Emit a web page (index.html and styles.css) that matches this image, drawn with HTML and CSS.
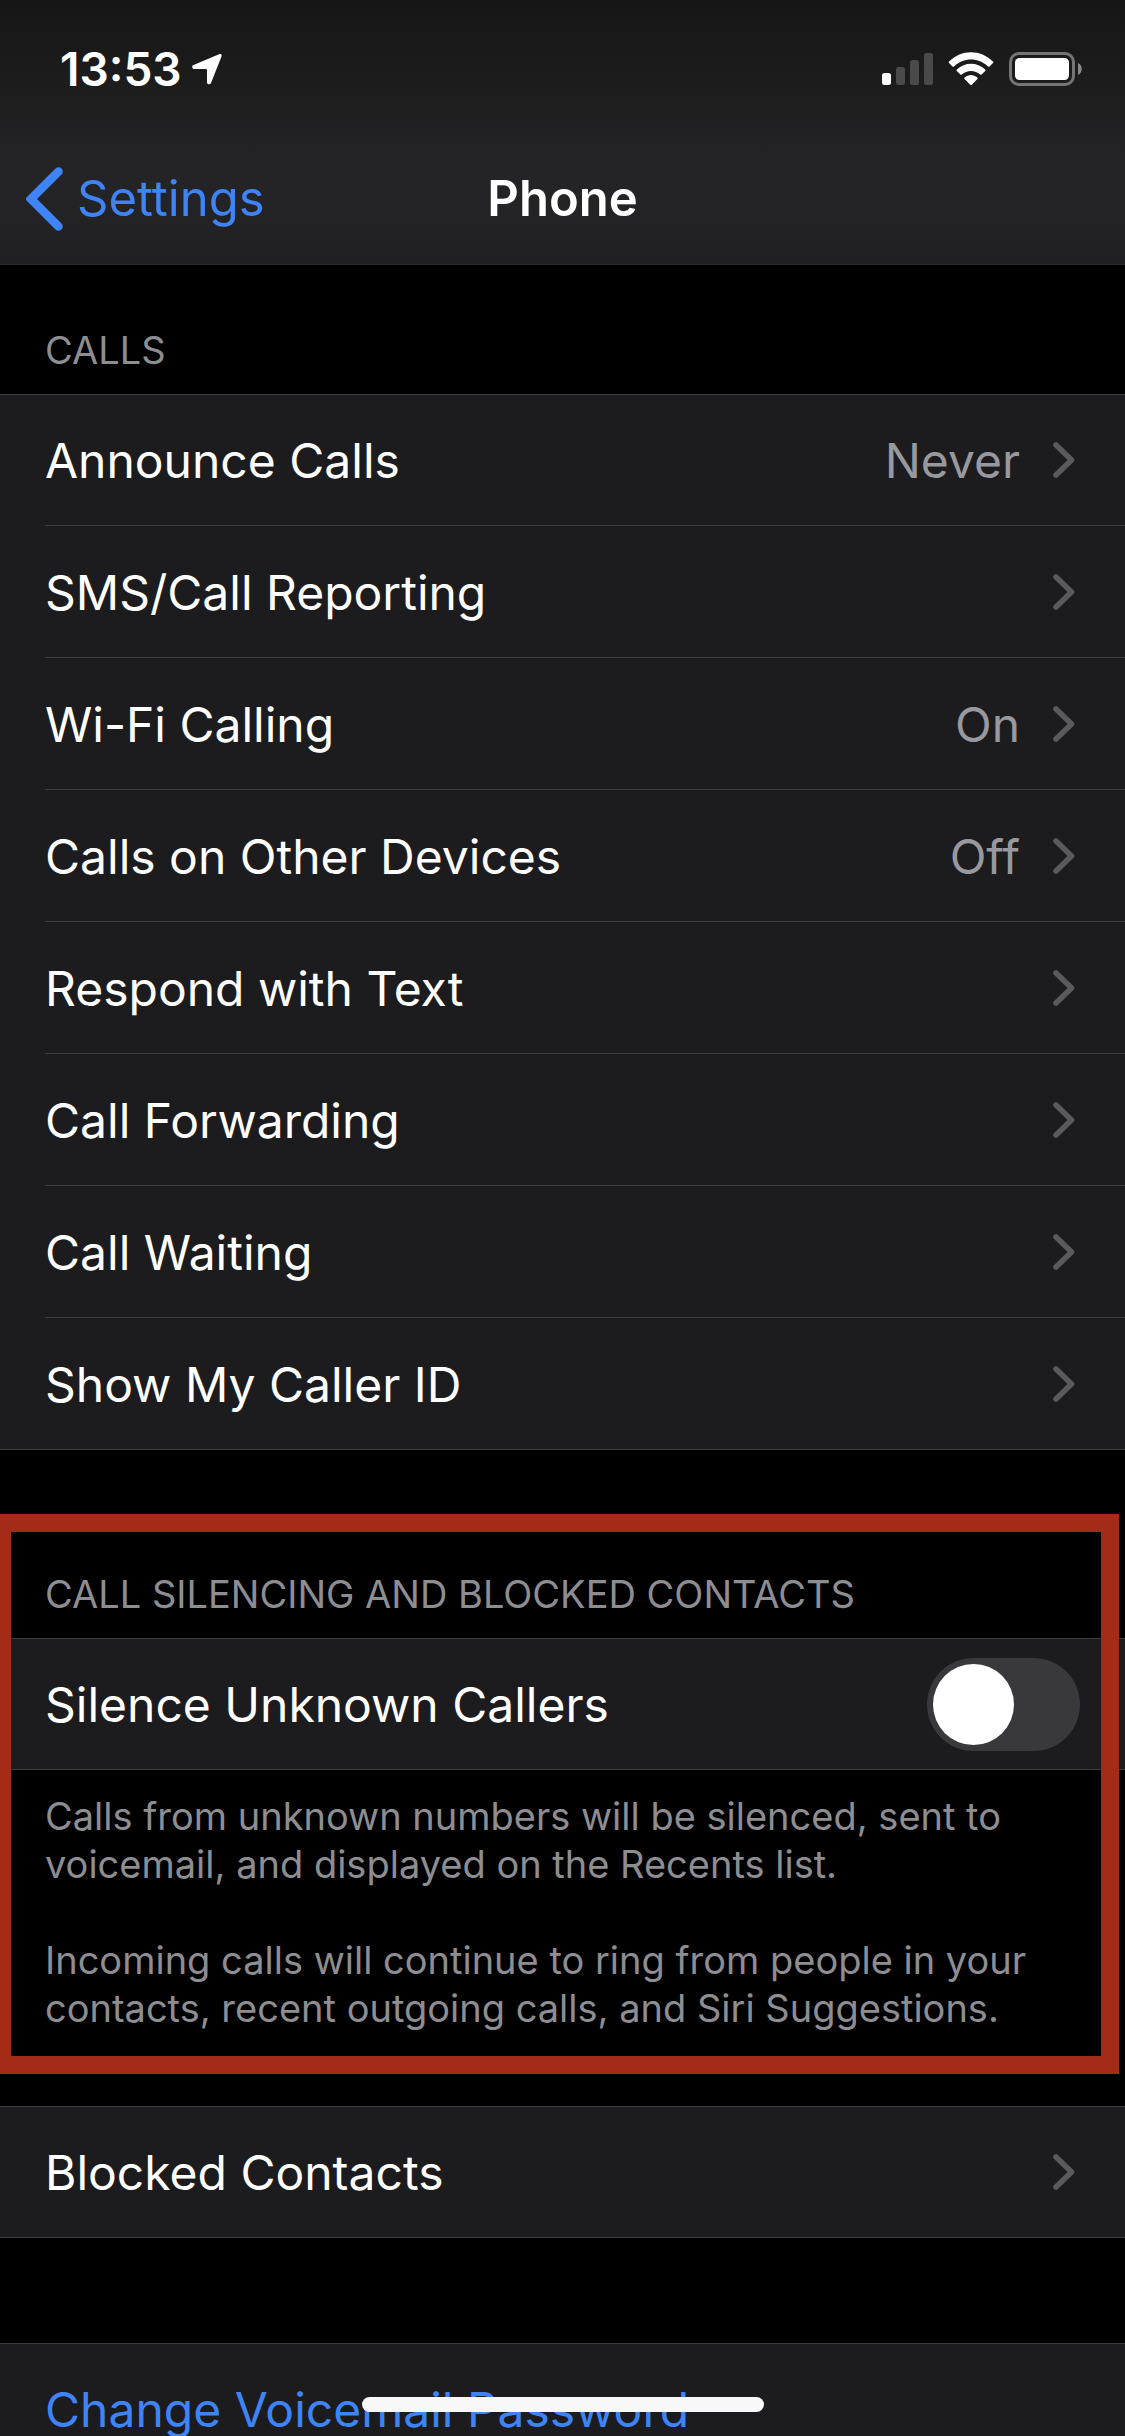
FILE: index.html
```html
<!DOCTYPE html>
<html lang="en">

<head>
    <meta charset="UTF-8">
    <meta name="viewport" content="width=device-width, initial-scale=1">
    <title>Phone</title>
    <link rel="stylesheet" href="styles.css">
</head>

<body>
    <!-- Shared chevron for the list rows -->
    <svg class="sprite" aria-hidden="true">
        <symbol id="chevron" viewBox="0 0 22 36">
            <path d="M3 3 L18.500 18 L3 33" fill="none" stroke="currentColor" stroke-width="5.500"
                stroke-linecap="round" stroke-linejoin="round" />
        </symbol>
    </svg>

    <header class="top-bar">
        <div class="status-bar">
            <div class="status-left">
                <span class="time">13:53</span>
                <svg class="location" viewBox="0 0 30 32" aria-hidden="true">
                    <path d="M27 1.200 C29 0.300 30.200 1.500 29.500 3.500 L19 30 C18.200 32 15 31.800 15 29.300 L15 17.500 C15 16.500 14.700 16 13.500 16 L2.500 16 C0 16 -0.600 13 1.500 12 Z"
                        fill="#fff" />
                </svg>
            </div>
            <div class="status-right">
                <svg class="signal" viewBox="0 0 51 34" aria-hidden="true">
                    <rect x="0" y="21" width="9" height="12" rx="2.500" fill="#fff" />
                    <rect x="14" y="15" width="9" height="18" rx="2.500" fill="#4a4a4b" />
                    <rect x="28" y="8" width="9" height="25" rx="2.500" fill="#4a4a4b" />
                    <rect x="42" y="1" width="9" height="32" rx="2.500" fill="#4a4a4b" />
                </svg>
                <svg class="wifi" viewBox="0 0 46 34" aria-hidden="true">
                    <path d="M1 9.500 C13.500 -3 32.500 -3 45 9.500 Q45.800 10.300 45 11 L41.500 14.500 Q40.800 15.200 40 14.500 C30.500 5.200 15.500 5.200 6 14.500 Q5.200 15.200 4.500 14.500 L1 11 Q0.200 10.300 1 9.500 Z"
                        fill="#fff" />
                    <path d="M8.800 17.500 C17 9.800 29 9.800 37.200 17.500 Q38 18.200 37.200 19 L33.600 22.500 Q33 23.200 32.200 22.500 C27 17.800 19 17.800 13.800 22.500 Q13 23.200 12.400 22.500 L8.800 19 Q8 18.200 8.800 17.500 Z"
                        fill="#fff" />
                    <path d="M16.600 25.600 C20.500 22.200 25.500 22.200 29.400 25.600 Q30.200 26.300 29.400 27 L23.800 32.700 Q23 33.400 22.200 32.700 L16.600 27 Q15.800 26.300 16.600 25.600 Z"
                        fill="#fff" />
                </svg>
                <svg class="battery" viewBox="0 0 74 34" aria-hidden="true">
                    <rect x="1.500" y="1.500" width="63" height="31" rx="8.500" fill="none" stroke="#757576"
                        stroke-width="3" />
                    <rect x="6" y="6" width="54" height="22" rx="4.500" fill="#fff" />
                    <path d="M69 11 C74 13 74 21 69 23 Z" fill="#8a8a8b" />
                </svg>
            </div>
        </div>
        <nav class="nav-bar">
            <a class="back" href="#settings">
                <svg class="back-icon" viewBox="0 0 37 64" aria-hidden="true">
                    <path d="M32.500 4.500 L5 32 L32.500 59.500" fill="none" stroke="currentColor" stroke-width="8.500"
                        stroke-linecap="round" stroke-linejoin="miter" />
                </svg>
                <span>Settings</span>
            </a>
            <h1>Phone</h1>
        </nav>
    </header>

    <main class="content">
        <section class="group">
            <h2>CALLS</h2>
            <ul class="list">
                <li><a class="row" href="#announce"><span class="label">Announce Calls</span><span class="value">Never</span><svg class="chevron"><use href="#chevron" /></svg></a></li>
                <li><a class="row" href="#reporting"><span class="label">SMS/Call Reporting</span><svg class="chevron"><use href="#chevron" /></svg></a></li>
                <li><a class="row" href="#wifi-calling"><span class="label">Wi-Fi Calling</span><span class="value">On</span><svg class="chevron"><use href="#chevron" /></svg></a></li>
                <li><a class="row" href="#other-devices"><span class="label">Calls on Other Devices</span><span class="value">Off</span><svg class="chevron"><use href="#chevron" /></svg></a></li>
                <li><a class="row" href="#respond"><span class="label">Respond with Text</span><svg class="chevron"><use href="#chevron" /></svg></a></li>
                <li><a class="row" href="#forwarding"><span class="label">Call Forwarding</span><svg class="chevron"><use href="#chevron" /></svg></a></li>
                <li><a class="row" href="#waiting"><span class="label">Call Waiting</span><svg class="chevron"><use href="#chevron" /></svg></a></li>
                <li><a class="row" href="#caller-id"><span class="label">Show My Caller ID</span><svg class="chevron"><use href="#chevron" /></svg></a></li>
            </ul>
        </section>

        <section class="group silencing">
            <h2>CALL SILENCING AND BLOCKED CONTACTS</h2>
            <ul class="list">
                <li>
                    <div class="row">
                        <label class="label" for="silence">Silence Unknown Callers</label>
                        <input class="switch" id="silence" type="checkbox" role="switch">
                    </div>
                </li>
            </ul>
            <div class="note">
                <p>Calls from unknown numbers will be silenced, sent to voicemail, and displayed on the Recents list.</p>
                <p>Incoming calls will continue to ring from people in your contacts, recent outgoing calls, and Siri Suggestions.</p>
            </div>
            <div class="highlight"></div>
        </section>

        <ul class="list">
            <li><a class="row" href="#blocked"><span class="label">Blocked Contacts</span><svg class="chevron"><use href="#chevron" /></svg></a></li>
        </ul>

        <ul class="list voicemail">
            <li><button class="row action" type="button"><span class="label">Change Voicemail Password</span></button></li>
        </ul>
    </main>

    <div class="home-indicator"></div>
</body>

</html>
```

FILE: styles.css
```css
* {
    box-sizing: border-box;
}

body {
    display: flex;
    flex-direction: column;
    height: 100vh;
    margin: 0;
    overflow: hidden;
    background: #000;
    color: #fff;
    font-family: Inter, 'Liberation Sans', sans-serif;
    font-size: 48px;
    line-height: 60px;
}

h1,
h2,
p,
ul {
    margin: 0;
    padding: 0;
}

a {
    color: inherit;
    text-decoration: none;
}

svg {
    display: block;
    flex-shrink: 0;
}

.sprite {
    position: absolute;
    width: 0;
    height: 0;
}

/* Status bar and navigation */
.top-bar {
    flex-shrink: 0;
    background: linear-gradient(#161617, #1c1c1d 30%, #242426 62%, #242426 75%, #202022);
    border-bottom: 1px solid #2a2a2b;
}

.status-bar {
    display: flex;
    align-items: center;
    justify-content: space-between;
    height: 132px;
    padding: 6px 42px 0 60px;
}

.status-left,
.status-right {
    display: flex;
    align-items: center;
}

.status-left {
    gap: 10px;
}

.status-right {
    gap: 15px;
}

.time {
    font-size: 46px;
    font-weight: 600;
}

.location {
    width: 30px;
    height: 32px;
}

.signal {
    width: 51px;
    height: 34px;
}

.wifi {
    width: 46px;
    height: 34px;
}

.battery {
    width: 74px;
    height: 34px;
}

.nav-bar {
    display: grid;
    grid-template-columns: 1fr auto 1fr;
    align-items: center;
    height: 132px;
    padding: 2px 26px 0;
    font-size: 49px;
}

.back {
    display: flex;
    align-items: center;
    gap: 14px;
    color: #3f84f7;
}

.back-icon {
    width: 37px;
    height: 64px;
}

h1 {
    font-size: 49px;
    font-weight: 600;
}

/* Grouped lists */
.content {
    flex: 1;
    min-height: 0;
    padding-top: 1px;
    overflow: hidden;
}

h2 {
    padding: 60px 45px 20px;
    color: #8d8d92;
    font-size: 38px;
    font-weight: 400;
    line-height: 48px;
}

.list {
    background: #1c1c1e;
    list-style: none;
}

.list li {
    display: flex;
    height: 132px;
    padding-left: 45px;
}

.list li:first-child {
    border-top: 1px solid #3c3c3f;
}

.list li:last-child {
    border-bottom: 1px solid #3c3c3f;
}

.row {
    display: flex;
    flex: 1;
    align-items: center;
    padding-right: 50px;
    border-bottom: 1px solid #3c3c3f;
}

.list li:last-child .row {
    border-bottom: 0;
}

.label,
.value {
    padding-top: 2px;
}

.label {
    flex: 1;
}

.value {
    color: #98989f;
}

.chevron {
    width: 22px;
    height: 36px;
    margin-left: 33px;
    color: #5a5a5e;
}

/* Switch row with its explanation */
.silencing {
    position: relative;
    padding-bottom: 74px;
}

.silencing h2 {
    padding-top: 120px;
}

.silencing .row {
    padding-right: 45px;
}

.switch {
    display: flex;
    align-items: center;
    width: 153px;
    height: 93px;
    margin: 0;
    padding: 6px;
    appearance: none;
    background: #39393d;
    border-radius: 47px;
}

.switch::before {
    content: '';
    width: 81px;
    height: 81px;
    background: #fff;
    border-radius: 50%;
}

.switch:checked {
    justify-content: flex-end;
    background: #30d158;
}

.note {
    padding: 22px 45px 0;
    color: #8d8d92;
    font-size: 38px;
    line-height: 48px;
}

.note p + p {
    margin-top: 48px;
}

.highlight {
    position: absolute;
    top: 64px;
    right: 6px;
    bottom: 32px;
    left: 0;
    border: 18px solid #a52b19;
    border-left-width: 11px;
    pointer-events: none;
}

.voicemail {
    margin-top: 105px;
}

.action {
    padding: 0;
    background: none;
    border: 0;
    color: #3f84f7;
    font: inherit;
    text-align: left;
}

.home-indicator {
    position: fixed;
    bottom: 24px;
    left: 50%;
    width: 402px;
    height: 15px;
    background: #f8f8f8;
    border-radius: 8px;
    transform: translateX(-50%);
}
```
